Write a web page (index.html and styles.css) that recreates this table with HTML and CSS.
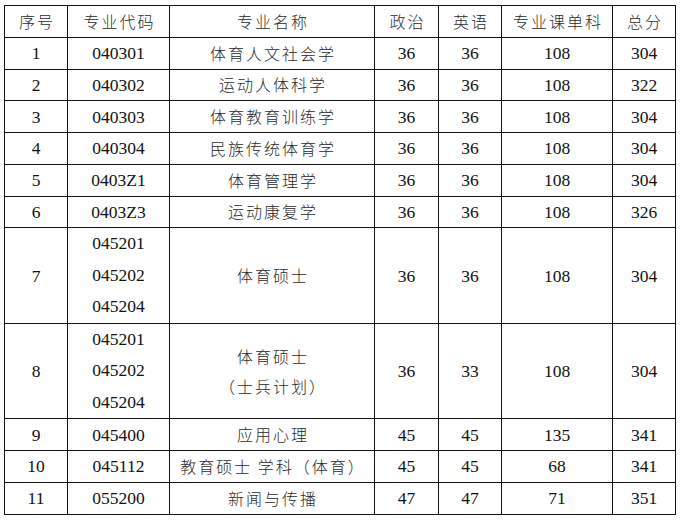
FILE: index.html
```html
<!DOCTYPE html>
<html lang="zh-CN">
<head>
<meta charset="utf-8">
<title>专业分数线</title>
<link rel="stylesheet" href="styles.css">
</head>
<body>
<table class="scores">
  <colgroup>
    <col class="c-no"><col class="c-code"><col class="c-name"><col class="c-pol"><col class="c-eng"><col class="c-major"><col class="c-total">
  </colgroup>
  <thead>
    <tr class="row">
      <th><span class="zh">序号</span></th>
      <th><span class="zh">专业代码</span></th>
      <th><span class="zh">专业名称</span></th>
      <th><span class="zh">政治</span></th>
      <th><span class="zh">英语</span></th>
      <th><span class="zh">专业课单科</span></th>
      <th><span class="zh">总分</span></th>
    </tr>
  </thead>
  <tbody>
    <tr class="row"><td>1</td><td>040301</td><td><span class="zh">体育人文社会学</span></td><td>36</td><td>36</td><td>108</td><td>304</td></tr>
    <tr class="row"><td>2</td><td>040302</td><td><span class="zh">运动人体科学</span></td><td>36</td><td>36</td><td>108</td><td>322</td></tr>
    <tr class="row"><td>3</td><td>040303</td><td><span class="zh">体育教育训练学</span></td><td>36</td><td>36</td><td>108</td><td>304</td></tr>
    <tr class="row"><td>4</td><td>040304</td><td><span class="zh">民族传统体育学</span></td><td>36</td><td>36</td><td>108</td><td>304</td></tr>
    <tr class="row"><td>5</td><td>0403Z1</td><td><span class="zh">体育管理学</span></td><td>36</td><td>36</td><td>108</td><td>304</td></tr>
    <tr class="row"><td>6</td><td>0403Z3</td><td><span class="zh">运动康复学</span></td><td>36</td><td>36</td><td>108</td><td>326</td></tr>
    <tr class="row tall">
      <td>7</td>
      <td><span class="line">045201</span><span class="line">045202</span><span class="line">045204</span></td>
      <td><span class="zh">体育硕士</span></td>
      <td>36</td><td>36</td><td>108</td><td>304</td>
    </tr>
    <tr class="row tall">
      <td>8</td>
      <td><span class="line">045201</span><span class="line">045202</span><span class="line">045204</span></td>
      <td><span class="zh block">体育硕士</span><span class="zh block">（士兵计划）</span></td>
      <td>36</td><td>33</td><td>108</td><td>304</td>
    </tr>
    <tr class="row"><td>9</td><td>045400</td><td><span class="zh">应用心理</span></td><td>45</td><td>45</td><td>135</td><td>341</td></tr>
    <tr class="row"><td>10</td><td>045112</td><td><span class="zh">教育硕士 学科（体育）</span></td><td>45</td><td>45</td><td>68</td><td>341</td></tr>
    <tr class="row"><td>11</td><td>055200</td><td><span class="zh">新闻与传播</span></td><td>47</td><td>47</td><td>71</td><td>351</td></tr>
  </tbody>
</table>
</body>
</html>
```

FILE: styles.css
```css
html, body {
  margin: 0;
  padding: 0;
  background: #fff;
}

body {
  padding: 5px 0 0 4px;
}

.scores {
  border-collapse: collapse;
  table-layout: fixed;
  width: 671px;
  font-size: 17.5px;
  color: #111;
}

.scores th,
.scores td {
  font-family: "Liberation Serif", "Times New Roman", serif;
  border: 1px solid #111;
  padding: 0;
  text-align: center;
  vertical-align: middle;
  font-weight: normal;
  line-height: 20px;
  white-space: nowrap;
}

.c-no { width: 63px; }
.c-code { width: 102px; }
.c-name { width: 205px; }
.c-pol { width: 64px; }
.c-eng { width: 63px; }
.c-major { width: 111px; }
.c-total { width: 63px; }

.row {
  height: 31.75px;
}

.row.tall {
  height: 94.35px;
}

.zh {
  font-family: "Noto Sans CJK SC", sans-serif;
  font-size: 16px;
  font-weight: 300;
  letter-spacing: 2px;
  padding-left: 2px;
  color: #2a2a2a;
}

.block {
  display: block;
  line-height: 30px;
}

.line {
  display: block;
  line-height: 31.5px;
}
```
